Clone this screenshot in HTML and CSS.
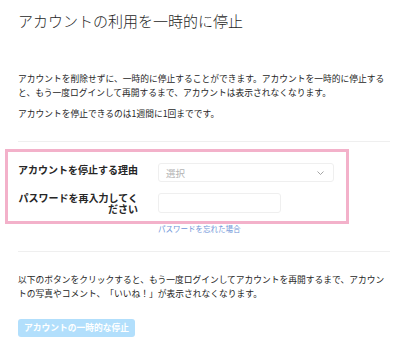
FILE: index.html
```html
<!DOCTYPE html>
<html lang="ja">
<head>
<meta charset="utf-8">
<link rel="stylesheet" href="styles.css">
</head>
<body>
<div class="page">
  <h1 class="title">アカウントの利用を一時的に停止</h1>
  <p class="text first">アカウントを削除せずに、一時的に停止することができます。アカウントを一時的に停止すると、もう一度ログインして再開するまで、アカウントは表示されなくなります。</p>
  <p class="text second">アカウントを停止できるのは1週間に1回までです。</p>
  <div class="divider top-divider"></div>
  <div class="highlight">
    <div class="row">
      <div class="label label-one">アカウントを停止する理由</div>
      <div class="select">
        <span class="placeholder">選択</span>
        <svg class="chevron" width="7" height="4" viewBox="0 0 7 4"><polyline points="0.5,0.5 3.5,3.5 6.5,0.5" fill="none" stroke="#8e8e8e" stroke-width="0.8"/></svg>
      </div>
    </div>
    <div class="row">
      <div class="label label-two">パスワードを再入力してください</div>
      <div class="input"></div>
    </div>
  </div>
  <a class="forgot">パスワードを忘れた場合</a>
  <div class="divider bottom-divider"></div>
  <p class="text third">以下のボタンをクリックすると、もう一度ログインしてアカウントを再開するまで、アカウントの写真やコメント、「いいね！」が表示されなくなります。</p>
  <button class="button">アカウントの一時的な停止</button>
</div>
</body>
</html>
```

FILE: styles.css
```css
html, body {
  margin: 0;
  padding: 0;
  background: #ffffff;
}
body {
  font-family: "Noto Sans CJK JP", "Noto Sans", sans-serif;
  color: #262626;
  text-spacing-trim: space-all;
}
.page {
  width: 400px;
  display: flex;
  flex-direction: column;
}
.title {
  margin: 12px 0 0 18px;
  font-size: 15px;
  line-height: 18px;
  font-weight: 300;
  color: #262626;
}
.text {
  margin: 0 0 0 18px;
  width: 372px;
  font-size: 8.75px;
  line-height: 14px;
  color: #262626;
}
.first { margin-top: 42px; }
.second { margin-top: 7px; }
.third { margin-top: 21px; }
.divider {
  margin-left: 18px;
  width: 372px;
  height: 1px;
  background: #efefef;
}
.top-divider { margin-top: 20px; }
.bottom-divider { margin-top: 18px; }
.highlight {
  margin: 7px 0 0 5px;
  width: 344px;
  height: 75px;
  box-sizing: border-box;
  border: 3px solid #f3b1ca;
  padding: 11px 0 0 9px;
  display: flex;
  flex-direction: column;
  gap: 11px;
}
.row {
  display: flex;
  align-items: flex-start;
  gap: 20px;
}
.label {
  width: 121px;
  text-align: right;
  font-size: 10px;
  line-height: 10px;
  font-weight: 700;
  color: #262626;
}
.label-one { margin-top: 2px; }
.label-two {
  line-height: 11px;
  margin-top: -1px;
}
.select {
  width: 176px;
  height: 19px;
  box-sizing: border-box;
  border: 1px solid #efefef;
  border-radius: 3px;
  background: #fff;
  display: flex;
  align-items: center;
  justify-content: space-between;
  padding: 0 9px 0 7px;
}
.placeholder {
  font-size: 9.5px;
  color: #b4b4b4;
}
.chevron { display: block; }
.input {
  width: 123px;
  height: 20px;
  box-sizing: border-box;
  border: 1px solid #efefef;
  border-radius: 3px;
  background: #fff;
}
.forgot {
  margin: 0 0 0 158px;
  font-size: 7.5px;
  line-height: 9px;
  color: #6d93d8;
}
.button {
  margin: 18px 0 0 18px;
  align-self: flex-start;
  height: 18px;
  padding: 0 6px;
  border: 0;
  border-radius: 3px;
  background: #b2dffc;
  color: #ffffff;
  font-family: "Noto Sans CJK JP", "Noto Sans", sans-serif;
  font-size: 8.75px;
  font-weight: 700;
  line-height: 18px;
}
```
